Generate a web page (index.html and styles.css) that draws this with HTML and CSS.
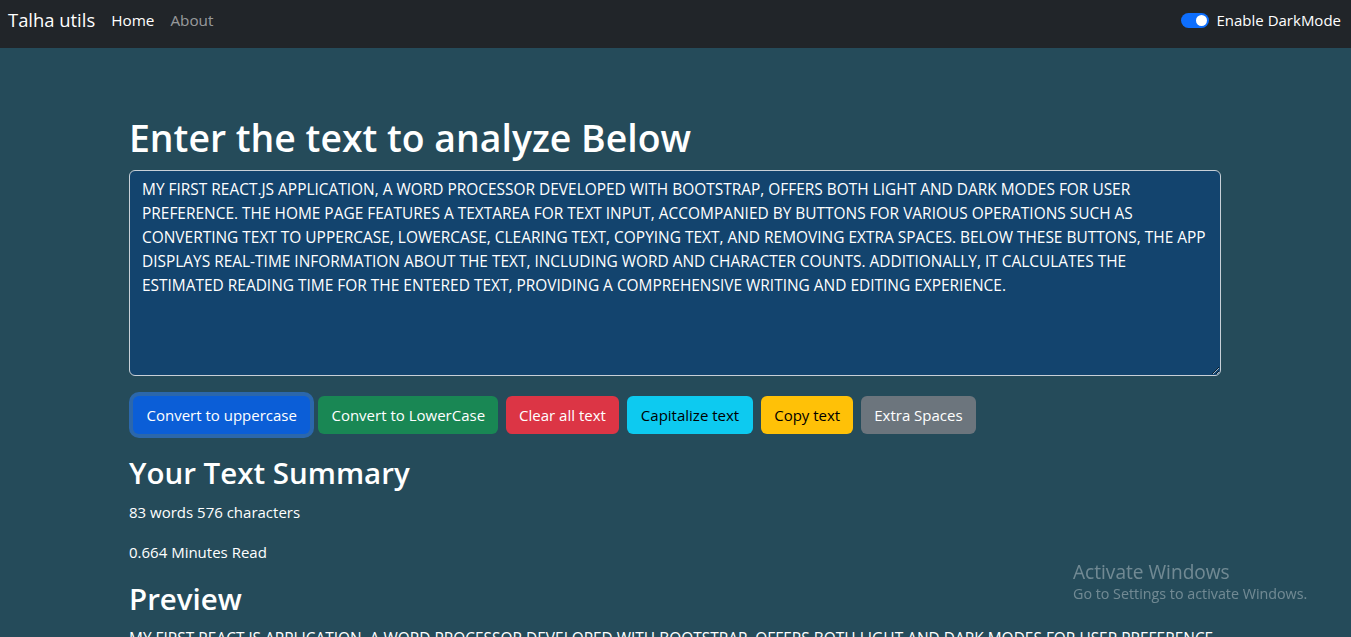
FILE: index.html
```html
<!DOCTYPE html>
<html lang="en">
<head>
<meta charset="utf-8">
<title>Talha utils</title>
<link rel="stylesheet" href="styles.css">
</head>
<body>
<nav class="navbar">
  <div class="nav-left">
    <a class="brand" href="#">Talha utils</a>
    <a class="nav-link active" href="#">Home</a>
    <a class="nav-link" href="#">About</a>
  </div>
  <label class="switch-wrap">
    <span class="switch"><span class="knob"></span></span>
    <span class="switch-label">Enable DarkMode</span>
  </label>
</nav>

<main class="container">
  <section class="analyzer">
    <h1 class="title">Enter the text to analyze Below</h1>
    <textarea class="textbox" rows="8">MY FIRST REACT.JS APPLICATION, A WORD PROCESSOR DEVELOPED WITH BOOTSTRAP, OFFERS BOTH LIGHT AND DARK MODES FOR USER PREFERENCE. THE HOME PAGE FEATURES A TEXTAREA FOR TEXT INPUT, ACCOMPANIED BY BUTTONS FOR VARIOUS OPERATIONS SUCH AS CONVERTING TEXT TO UPPERCASE, LOWERCASE, CLEARING TEXT, COPYING TEXT, AND REMOVING EXTRA SPACES. BELOW THESE BUTTONS, THE APP DISPLAYS REAL-TIME INFORMATION ABOUT THE TEXT, INCLUDING WORD AND CHARACTER COUNTS. ADDITIONALLY, IT CALCULATES THE ESTIMATED READING TIME FOR THE ENTERED TEXT, PROVIDING A COMPREHENSIVE WRITING AND EDITING EXPERIENCE.</textarea>
    <div class="buttons">
      <button class="btn btn-primary focused">Convert to uppercase</button>
      <button class="btn btn-success">Convert to LowerCase</button>
      <button class="btn btn-danger">Clear all text</button>
      <button class="btn btn-info">Capitalize text</button>
      <button class="btn btn-warning">Copy text</button>
      <button class="btn btn-secondary">Extra Spaces</button>
    </div>
  </section>

  <section class="summary">
    <h2 class="subtitle">Your Text Summary</h2>
    <p class="para">83 words 576 characters</p>
    <p class="para">0.664 Minutes Read</p>
    <h2 class="subtitle">Preview</h2>
    <p class="para preview">MY FIRST REACT.JS APPLICATION, A WORD PROCESSOR DEVELOPED WITH BOOTSTRAP, OFFERS BOTH LIGHT AND DARK MODES FOR USER PREFERENCE. THE HOME PAGE FEATURES A TEXTAREA FOR TEXT INPUT, ACCOMPANIED BY BUTTONS FOR VARIOUS OPERATIONS SUCH AS CONVERTING TEXT TO UPPERCASE, LOWERCASE, CLEARING TEXT, COPYING TEXT, AND REMOVING EXTRA SPACES. BELOW THESE BUTTONS, THE APP DISPLAYS REAL-TIME INFORMATION ABOUT THE TEXT, INCLUDING WORD AND CHARACTER COUNTS. ADDITIONALLY, IT CALCULATES THE ESTIMATED READING TIME FOR THE ENTERED TEXT, PROVIDING A COMPREHENSIVE WRITING AND EDITING EXPERIENCE.</p>
  </section>
</main>

<div class="watermark">
  <div class="wm-title">Activate Windows</div>
  <div class="wm-sub">Go to Settings to activate Windows.</div>
</div>
</body>
</html>
```

FILE: styles.css
```css
html {
  scrollbar-width: none;
}
html::-webkit-scrollbar {
  display: none;
}
* {
  box-sizing: border-box;
}
body {
  margin: 0;
  background: #254b5a;
  color: #fff;
  font-family: "Open Sans", "Noto Sans", sans-serif;
  font-size: 16px;
  line-height: 24px;
}

.navbar {
  height: 48px;
  background: #212529;
  display: flex;
  align-items: center;
  justify-content: space-between;
  padding: 0 10px 8px 8px;
}
.nav-left {
  display: flex;
  align-items: center;
}
.brand {
  color: #fff;
  text-decoration: none;
  font-size: 18.4px;
  margin-right: 16px;
}
.nav-link {
  color: rgba(255, 255, 255, 0.55);
  text-decoration: none;
  font-size: 15.3px;
  padding: 8px 8px 8px 0;
  margin-right: 8px;
}
.nav-link.active {
  color: #fff;
}
.switch-wrap {
  display: flex;
  align-items: center;
  gap: 8px;
}
.switch {
  width: 28px;
  height: 15px;
  border-radius: 8px;
  background: #0d6efd;
  display: flex;
  align-items: center;
  justify-content: flex-end;
  padding: 0 2px;
}
.knob {
  width: 11px;
  height: 11px;
  border-radius: 50%;
  background: #fff;
}
.switch-label {
  font-size: 15px;
}

.container {
  width: 1093px;
  padding-right: 1px;
  margin: 0 auto;
  padding-top: 66px;
}
.title {
  font-size: 37.4px;
  font-weight: 600;
  line-height: 48px;
  margin: 0 0 8px;
}
.textbox {
  display: block;
  width: 100%;
  height: 206px;
  background: #13446e;
  color: #fff;
  border: 1px solid #c8d0d8;
  border-radius: 6px;
  padding: 6px 12px;
  font-family: inherit;
  font-size: 15.45px;
  line-height: 24px;
  resize: vertical;
  margin-bottom: 16px;
  outline: none;
}
.buttons {
  display: flex;
  flex-wrap: wrap;
  gap: 8px;
  padding: 4px;
}
.btn {
  height: 38px;
  border: 1px solid transparent;
  border-radius: 6px;
  padding: 6px 12px;
  font-family: inherit;
  font-size: 15px;
  line-height: 24px;
  color: #fff;
}
.btn-primary { background: #0b5ed7; padding: 6px 12.5px; }
.btn-primary.focused { box-shadow: 0 0 0 4px rgba(49, 132, 253, 0.5); }
.btn-success { background: #198754; }
.btn-danger { background: #dc3545; }
.btn-info { background: #0dcaf0; color: #000; padding: 6px 13px; }
.btn-warning { background: #ffc107; color: #000; }
.btn-secondary { background: #6c757d; }

.summary {
  margin-top: 16px;
}
.subtitle {
  font-size: 29.5px;
  font-weight: 600;
  line-height: 38px;
  margin: 0 0 8px;
}
.para {
  margin: 0 0 16px;
  font-size: 15px;
}
.preview {
  font-size: 15.45px;
}

.watermark {
  position: fixed;
  left: 1073px;
  top: 560px;
  color: rgba(255, 255, 255, 0.35);
}
.wm-title {
  font-size: 19.1px;
  line-height: 24px;
}
.wm-sub {
  font-size: 14.3px;
  line-height: 20px;
}
```
